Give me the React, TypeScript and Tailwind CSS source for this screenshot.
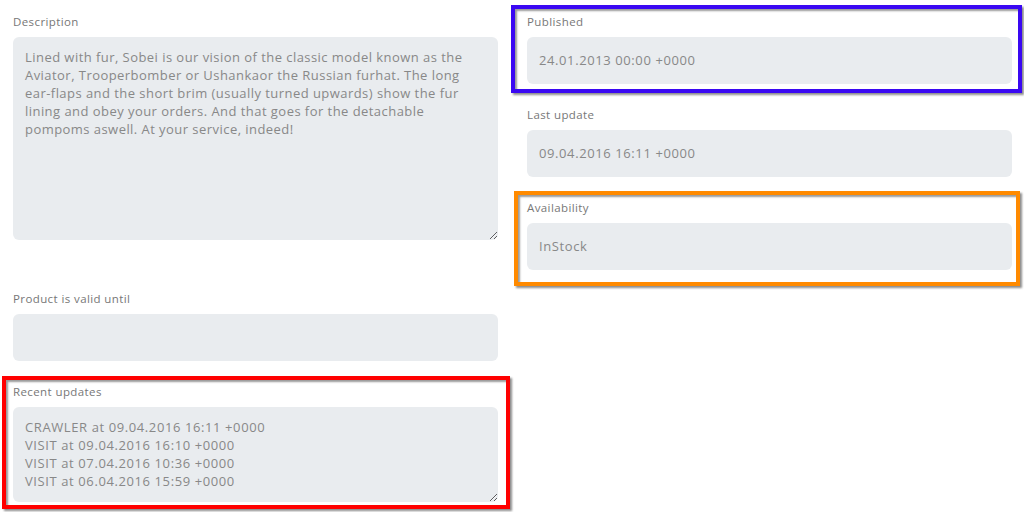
import React from "react";

const font = { fontFamily: '"Open Sans", "Liberation Sans", sans-serif' };

function Label({ children }: { children: React.ReactNode }) {
  return (
    <div className="h-[16px] leading-[16px] text-[11.5px] font-medium tracking-[0.4px] text-[#777] mb-[7px] whitespace-nowrap">
      {children}
    </div>
  );
}

function Input({ value }: { value: string }) {
  return (
    <div className="h-[47px] rounded-[6px] bg-[#e9ecef] px-[12px] flex items-center text-[13px] tracking-[0.6px] text-[#888] whitespace-nowrap">
      {value}
    </div>
  );
}

function Area({ value, h, track }: { value: string; h: string; track: string }) {
  return (
    <textarea
      readOnly
      value={value}
      className={`block w-full ${h} ${track} rounded-[6px] bg-[#e9ecef] px-[12px] pt-[11px] text-[13px] leading-[18px] text-[#888] overflow-hidden outline-none`}
      style={font}
    />
  );
}

const desc =
  "Lined with fur, Sobei is our vision of the classic model known as the\nAviator, Trooperbomber or Ushankaor the Russian furhat. The long\near-flaps and the short brim (usually turned upwards) show the fur\nlining and obey your orders. And that goes for the detachable\npompoms aswell. At your service, indeed!";

const recent =
  "CRAWLER at 09.04.2016 16:11 +0000\nVISIT at 09.04.2016 16:10 +0000\nVISIT at 07.04.2016 10:36 +0000\nVISIT at 06.04.2016 15:59 +0000";

const shade =
  "shadow-[2px_2px_2px_rgba(0,0,0,0.45),inset_2px_2px_2px_rgba(0,0,0,0.4)]";

export default function App() {
  return (
    <div
      className="w-[1024px] h-[512px] bg-white overflow-hidden flex pl-[13px] pt-[14px] gap-[29px]"
      style={font}
    >
      <div className="w-[485px] shrink-0 flex flex-col">
        <div className="mb-[51px]">
          <Label>Description</Label>
          <Area value={desc} h="h-[203px]" track="tracking-[0.45px]" />
        </div>
        <div className="mb-[23px]">
          <Label>Product is valid until</Label>
          <Input value="" />
        </div>
        <div
          className={`-ml-[11px] -mr-[12px] -mt-[8px] pl-[7px] pr-[8px] pt-[4px] pb-[3px] border-4 border-[#ff0000] ${shade}`}
        >
          <Label>Recent updates</Label>
          <Area value={recent} h="h-[95px]" track="tracking-[0.6px]" />
        </div>
      </div>
      <div className="w-[485px] shrink-0 flex flex-col gap-[23px]">
        <div
          className={`-ml-[16px] -mr-[10px] -mt-[9px] -mb-[9px] pl-[12px] pr-[6px] pt-[5px] pb-[5px] border-4 border-[#3a08f2] ${shade}`}
        >
          <Label>Published</Label>
          <Input value="24.01.2013 00:00 +0000" />
        </div>
        <div>
          <Label>Last update</Label>
          <Input value="09.04.2016 16:11 +0000" />
        </div>
        <div
          className={`-ml-[13px] -mr-[8px] -mt-[9px] -mb-[16px] pl-[9px] pr-[4px] pt-[5px] pb-[12px] border-4 border-[#ff8a00] ${shade}`}
        >
          <Label>Availability</Label>
          <Input value="InStock" />
        </div>
      </div>
    </div>
  );
}
